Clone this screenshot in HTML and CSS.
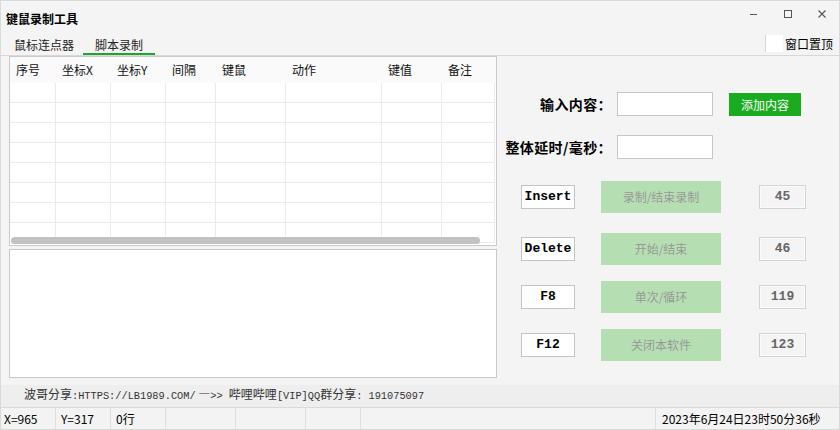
FILE: index.html
```html
<!DOCTYPE html>
<html lang="zh-CN">
<head>
<meta charset="utf-8">
<title>键鼠录制工具</title>
<link rel="stylesheet" href="styles.css">
</head>
<body>
<div class="window">
  <div class="titlebar">
    <div class="title">键鼠录制工具</div>
    <div class="controls">
      <span class="ctl"><svg width="10" height="10" viewBox="0 0 10 10"><path d="M1 5.5H8" stroke="#555" stroke-width="1"/></svg></span>
      <span class="ctl"><svg width="10" height="10" viewBox="0 0 10 10"><rect x="1.5" y="1.5" width="7" height="7" fill="none" stroke="#555" stroke-width="1"/></svg></span>
      <span class="ctl"><svg width="10" height="10" viewBox="0 0 10 10"><path d="M1.5 1.5L8.5 8.5M8.5 1.5L1.5 8.5" stroke="#555" stroke-width="1.1"/></svg></span>
    </div>
  </div>
  <div class="tabs">
    <div class="tab">鼠标连点器</div>
    <div class="tab active">脚本录制</div>
    <div class="spacer"></div>
    <label class="topmost"><span class="check"></span>窗口置顶</label>
  </div>
  <div class="main">
    <div class="left">
      <div class="grid">
        <div class="row head">
          <div class="cell">序号</div><div class="cell">坐标X</div><div class="cell">坐标Y</div><div class="cell">间隔</div><div class="cell">键鼠</div><div class="cell">动作</div><div class="cell">键值</div><div class="cell">备注</div>
        </div>
        <div class="row"><div class="cell"></div><div class="cell"></div><div class="cell"></div><div class="cell"></div><div class="cell"></div><div class="cell"></div><div class="cell"></div><div class="cell"></div></div>
        <div class="row"><div class="cell"></div><div class="cell"></div><div class="cell"></div><div class="cell"></div><div class="cell"></div><div class="cell"></div><div class="cell"></div><div class="cell"></div></div>
        <div class="row"><div class="cell"></div><div class="cell"></div><div class="cell"></div><div class="cell"></div><div class="cell"></div><div class="cell"></div><div class="cell"></div><div class="cell"></div></div>
        <div class="row"><div class="cell"></div><div class="cell"></div><div class="cell"></div><div class="cell"></div><div class="cell"></div><div class="cell"></div><div class="cell"></div><div class="cell"></div></div>
        <div class="row"><div class="cell"></div><div class="cell"></div><div class="cell"></div><div class="cell"></div><div class="cell"></div><div class="cell"></div><div class="cell"></div><div class="cell"></div></div>
        <div class="row"><div class="cell"></div><div class="cell"></div><div class="cell"></div><div class="cell"></div><div class="cell"></div><div class="cell"></div><div class="cell"></div><div class="cell"></div></div>
        <div class="row"><div class="cell"></div><div class="cell"></div><div class="cell"></div><div class="cell"></div><div class="cell"></div><div class="cell"></div><div class="cell"></div><div class="cell"></div></div>
        <div class="row"><div class="cell"></div><div class="cell"></div><div class="cell"></div><div class="cell"></div><div class="cell"></div><div class="cell"></div><div class="cell"></div><div class="cell"></div></div>
        <div class="hscroll"></div>
      </div>
      <div class="memo"></div>
    </div>
    <div class="right">
      <div class="form">
        <div class="label">输入内容：</div>
        <div class="input"></div>
        <div class="add-btn">添加内容</div>
        <div class="label">整体延时/毫秒：</div>
        <div class="input"></div>
        <div></div>
      </div>
      <div class="keys">
        <div class="keyrow r1"><div class="key">Insert</div><div class="act">录制/结束录制</div><div class="num">45</div></div>
        <div class="keyrow r2"><div class="key">Delete</div><div class="act">开始/结束</div><div class="num">46</div></div>
        <div class="keyrow r3"><div class="key">F8</div><div class="act">单次/循环</div><div class="num">119</div></div>
        <div class="keyrow r4"><div class="key">F12</div><div class="act">关闭本软件</div><div class="num">123</div></div>
      </div>
    </div>
  </div>
  <div class="share">波哥分享<span class="mono">:HTTPS://LB1989.COM/</span> —<span class="mono">&gt;&gt; </span>哔哩哔哩<span class="mono">[VIP]QQ</span>群分享<span class="mono">: 191075097</span></div>
  <div class="status">
    <div class="seg s1">X=965</div>
    <div class="seg s2">Y=317</div>
    <div class="seg s3">0行</div>
    <div class="seg s4"></div>
    <div class="seg s5"></div>
    <div class="seg s6"></div>
    <div class="seg s7"></div>
    <div class="seg s8">2023年6月24日23时50分36秒</div>
  </div>
</div>
</body>
</html>
```

FILE: styles.css
```css
* { box-sizing: border-box; }
html, body { margin: 0; padding: 0; }
body {
  width: 840px;
  height: 430px;
  overflow: hidden;
  background: #f3f3f3;
  font-family: "Noto Sans CJK SC", "Noto Sans", sans-serif;
  font-size: 12px;
  color: #000;
}
.window {
  width: 840px;
  height: 430px;
  border: 1px solid #d9d9d9;
  border-bottom: none;
  background: #f4f4f4;
  display: flex;
  flex-direction: column;
}
.titlebar {
  height: 29px;
  display: flex;
  align-items: center;
  justify-content: space-between;
}
.title {
  padding-left: 5px;
  padding-top: 7px;
  font-weight: 700;
  font-size: 12px;
  line-height: 16px;
}
.controls { display: flex; align-items: center; height: 29px; }
.ctl {
  width: 34px;
  height: 29px;
  display: flex;
  align-items: center;
  justify-content: center;
  padding-bottom: 4px;
}
.tabs {
  height: 26px;
  display: flex;
  align-items: stretch;
  border-bottom: 1px solid #d8d8d8;
}
.tab {
  line-height: 16px;
  padding: 7px 0 0 0;
  color: #222;
  font-size: 12px;
}
.tab:first-child { margin-left: 13px; width: 60px; }
.tab.active {
  margin-left: 9px;
  width: 72px;
  text-align: center;
  border-bottom: 2px solid #1fa52a;
}
.spacer { flex: 1; }
.topmost {
  display: flex;
  align-items: center;
  padding-right: 6px;
  font-size: 12px;
  padding-top: 1px;
}
.check {
  width: 18px;
  height: 17px;
  background: #fff;
  border-left: 1px solid #d6d6d6;
  margin-right: 2px;
}
.main {
  flex: 1;
  display: flex;
  min-height: 0;
}
.left {
  width: 496px;
  padding-left: 8px;
  display: flex;
  flex-direction: column;
  gap: 3px;
}
.grid {
  position: relative;
  height: 190px;
  border: 1px solid #c9c9c9;
  background: #fff;
  overflow: hidden;
}
.row {
  display: grid;
  grid-template-columns: 46px 55px 55px 50px 70px 96px 60px 53px;
  height: 20px;
}
.row .cell {
  border-right: 1px solid #ebebeb;
  border-bottom: 1px solid #ebebeb;
}
.row.head {
  height: 26px;
  background: #fafafa;
}
.row.head .cell {
  border: none;
  padding: 5px 0 0 6px;
  line-height: 16px;
  color: #111;
}
.hscroll {
  position: absolute;
  left: 1px;
  top: 180px;
  width: 469px;
  height: 7px;
  border-radius: 4px;
  background: #c2c2c2;
}
.memo {
  height: 129px;
  border: 1px solid #c9c9c9;
  background: #fff;
}
.right {
  flex: 1;
  padding-top: 36px;
}
.form {
  display: grid;
  grid-template-columns: 115px 96px 83px;
  column-gap: 5px;
  row-gap: 19px;
  align-items: center;
}
.form .add-btn { margin-left: 11px; }
.label {
  text-align: right;
  font-weight: 700;
  font-size: 14px;
  line-height: 24px;
  color: #000;
  letter-spacing: 0.4px;
}
.input {
  height: 24px;
  border: 1px solid #c6c6c6;
  background: #fff;
}
.add-btn {
  height: 23px;
  width: 72px;
  background: #1bab20;
  color: #fff;
  text-align: center;
  line-height: 23px;
  font-size: 12px;
}
.keys { display: flex; flex-direction: column; }
.keyrow {
  display: flex;
  align-items: center;
  height: 32px;
}
.keyrow.r1 { margin-top: 22px; }
.keyrow.r2 { margin-top: 20px; }
.keyrow.r3 { margin-top: 16px; }
.keyrow.r4 { margin-top: 16px; }
.key {
  margin-left: 24px;
  width: 54px;
  height: 24px;
  border: 1px solid #c3c3c3;
  background: #fff;
  text-align: center;
  line-height: 22px;
  font-family: "Liberation Mono", "DejaVu Sans Mono", monospace;
  font-weight: 700;
  font-size: 13px;
  color: #000;
}
.act {
  margin-left: 26px;
  width: 120px;
  height: 32px;
  background: #b5dfb2;
  color: #999;
  text-align: center;
  line-height: 32px;
  font-size: 12px;
}
.num {
  margin-left: 38px;
  width: 47px;
  height: 24px;
  border: 1px solid #d3d3d3;
  box-shadow: inset 0 0 0 1px #fbfbfb;
  background: #f4f4f4;
  text-align: center;
  line-height: 22px;
  font-family: "Liberation Mono", "DejaVu Sans Mono", monospace;
  font-weight: 700;
  font-size: 13px;
  color: #666;
}
.share {
  height: 22px;
  background: #eeeeee;
  padding-left: 23px;
  line-height: 18px;
  font-size: 12px;
  color: #333;
  white-space: nowrap;
}
.mono {
  font-family: "Liberation Mono", "DejaVu Sans Mono", monospace;
  font-size: 10.3px;
}
.status {
  height: 23px;
  border-top: 1px solid #d9d9d9;
  border-bottom: 1px solid #d9d9d9;
  background: #f3f3f3;
  display: flex;
  line-height: 21px;
  font-size: 12px;
  color: #000;
}
.seg {
  border-right: 1px solid #dedede;
  padding-left: 3px;
  white-space: nowrap;
}
.s1 { width: 55px; }
.s2 { width: 55px; padding-left: 5px; }
.s3 { width: 55px; padding-left: 5px; }
.s4 { width: 70px; }
.s5 { width: 70px; }
.s6 { width: 55px; }
.s7 { width: 295px; }
.s8 { flex: 1; border-right: none; padding-left: 6px; }
```
